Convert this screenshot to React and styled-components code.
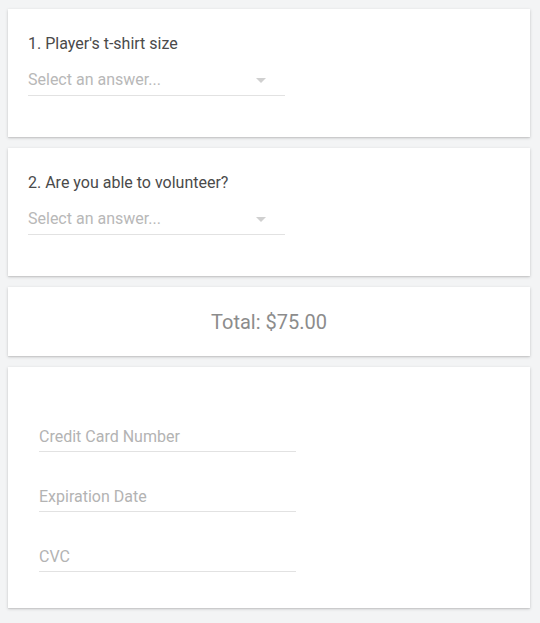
import React from "react";
import styled, { createGlobalStyle } from "styled-components";

const Global = createGlobalStyle`
  html, body { margin: 0; padding: 0; background: #f3f4f5; }
  body { font-family: Roboto, "Liberation Sans", Arial, sans-serif; }
  * { box-sizing: border-box; }
`;

const Page = styled.div`
  display: flex;
  flex-direction: column;
  gap: 11px;
  padding: 9px 10px 15px 8px;
  width: 540px;
`;

const Card = styled.div`
  background: #fff;
  box-shadow: 0 1px 3px rgba(0, 0, 0, 0.18), 0 1px 1px rgba(0, 0, 0, 0.06);
  padding: ${(p) => p.$pad || "0"};
  height: ${(p) => p.$h || "auto"};
`;

const Question = styled.div`
  font-size: 16px;
  line-height: 20px;
  color: #4a4a4a;
  margin-bottom: 10px;
`;

const Select = styled.div`
  width: 257px;
  height: 32px;
  border-bottom: 1px solid #e2e2e2;
  display: flex;
  align-items: center;
  justify-content: space-between;
  padding-right: 19px;
  font-size: 16px;
  color: #b8b8b8;
`;

const Arrow = styled.span`
  width: 0;
  height: 0;
  border-left: 5px solid transparent;
  border-right: 5px solid transparent;
  border-top: 5px solid #d0d0d0;
  margin-top: 2px;
`;

const Total = styled.div`
  height: 69px;
  display: flex;
  align-items: center;
  justify-content: center;
  font-size: 20px;
  color: #8c8c8c;
`;

const Fields = styled.div`
  display: flex;
  flex-direction: column;
  gap: 28px;
`;

const Field = styled.div`
  width: 257px;
  height: 32px;
  border-bottom: 1px solid #e2e2e2;
  display: flex;
  align-items: center;
  font-size: 16px;
  color: #b3b3b3;
  padding-top: 1px;
`;

export default function App() {
  return (
    <>
      <Global />
      <Page>
        <Card $pad="25px 20px 0 20px" $h="128px">
          <Question>1. Player's t-shirt size</Question>
          <Select>
            Select an answer...
            <Arrow />
          </Select>
        </Card>
        <Card $pad="25px 20px 0 20px" $h="128px">
          <Question>2. Are you able to volunteer?</Question>
          <Select>
            Select an answer...
            <Arrow />
          </Select>
        </Card>
        <Card>
          <Total>Total: $75.00</Total>
        </Card>
        <Card $pad="53px 31px 0 31px" $h="241px">
          <Fields>
            <Field>Credit Card Number</Field>
            <Field>Expiration Date</Field>
            <Field>CVC</Field>
          </Fields>
        </Card>
      </Page>
    </>
  );
}
